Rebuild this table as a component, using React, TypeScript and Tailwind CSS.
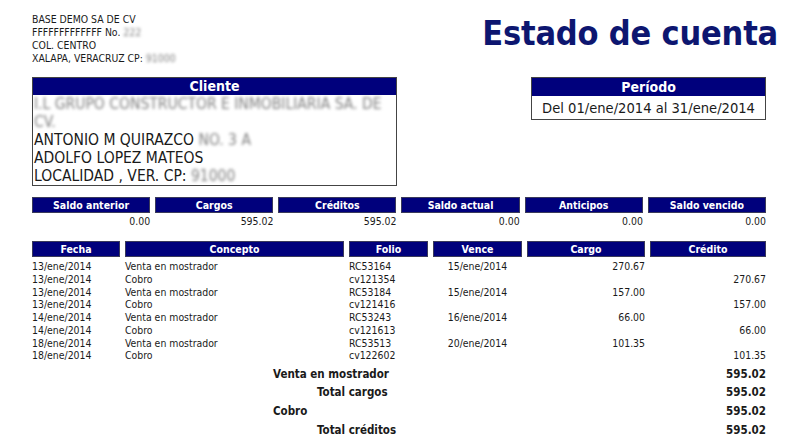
import React from 'react'

const movimientos = [
  { fecha: '13/ene/2014', concepto: 'Venta en mostrador', folio: 'RC53164', vence: '15/ene/2014', cargo: '270.67', credito: '' },
  { fecha: '13/ene/2014', concepto: 'Cobro', folio: 'cv121354', vence: '', cargo: '', credito: '270.67' },
  { fecha: '13/ene/2014', concepto: 'Venta en mostrador', folio: 'RC53184', vence: '15/ene/2014', cargo: '157.00', credito: '' },
  { fecha: '13/ene/2014', concepto: 'Cobro', folio: 'cv121416', vence: '', cargo: '', credito: '157.00' },
  { fecha: '14/ene/2014', concepto: 'Venta en mostrador', folio: 'RC53243', vence: '16/ene/2014', cargo: '66.00', credito: '' },
  { fecha: '14/ene/2014', concepto: 'Cobro', folio: 'cv121613', vence: '', cargo: '', credito: '66.00' },
  { fecha: '18/ene/2014', concepto: 'Venta en mostrador', folio: 'RC53513', vence: '20/ene/2014', cargo: '101.35', credito: '' },
  { fecha: '18/ene/2014', concepto: 'Cobro', folio: 'cv122602', vence: '', cargo: '', credito: '101.35' },
]

const resumen = [
  { label: 'Saldo anterior', value: '0.00' },
  { label: 'Cargos', value: '595.02' },
  { label: 'Créditos', value: '595.02' },
  { label: 'Saldo actual', value: '0.00' },
  { label: 'Anticipos', value: '0.00' },
  { label: 'Saldo vencido', value: '0.00' },
]

const totales = [
  { label: 'Venta en mostrador', value: '595.02', indent: false },
  { label: 'Total cargos', value: '595.02', indent: true },
  { label: 'Cobro', value: '595.02', indent: false },
  { label: 'Total créditos', value: '595.02', indent: true },
]

// texto borroso (datos ocultos)
function Blur({ children }: { children: React.ReactNode }) {
  return <span className="text-[#808080] blur-[1.4px]">{children}</span>
}

function Bar({ children, className = '' }: { children: React.ReactNode; className?: string }) {
  return (
    <div className={`bg-[#00007c] text-white font-bold text-center border border-[#3a3a5a] ${className}`}>
      {children}
    </div>
  )
}

export default function App() {
  return (
    <div className="w-[800px] h-[446px] bg-white text-[#1a1a1a] pl-[32px] font-['DejaVu_Sans_Condensed','DejaVu_Sans',sans-serif] overflow-hidden">
      {/* encabezado */}
      <div className="flex justify-between w-[734px] h-[77px]">
        <div className="pt-[13px] text-[10.4px] leading-[13px]">
          <div>BASE DEMO SA DE CV</div>
          <div>FFFFFFFFFFFFF No. <Blur>222</Blur></div>
          <div>COL. CENTRO</div>
          <div>XALAPA, VERACRUZ CP: <Blur>91000</Blur></div>
        </div>
        <h1 className="text-[34px] leading-[40px] font-bold text-[#0d1670] mt-[13px] -mr-[12px] tracking-[-0.2px]">
          Estado de cuenta
        </h1>
      </div>

      {/* cliente y periodo */}
      <div className="flex justify-between items-start w-[734px]">
        <div className="w-[365px] border border-[#444]">
          <div className="h-[17px] bg-[#00007c] text-white font-bold text-[14px] leading-[17px] text-center">Cliente</div>
          <div className="text-[15.5px] leading-[18px] px-[1px] whitespace-nowrap">
            <div><Blur>I.L GRUPO CONSTRUCTOR E INMOBILIARIA SA. DE</Blur></div>
            <div><Blur>CV.</Blur></div>
            <div>ANTONIO M QUIRAZCO <Blur>NO. 3 A</Blur></div>
            <div>ADOLFO LOPEZ MATEOS</div>
            <div>LOCALIDAD , VER. CP: <Blur>91000</Blur></div>
          </div>
        </div>
        <div className="w-[235px] border border-[#444]">
          <div className="h-[18px] bg-[#00007c] text-white font-bold text-[14px] leading-[18px] text-center">Período</div>
          <div className="h-[23px] text-[14.6px] leading-[24px] text-center">Del 01/ene/2014 al 31/ene/2014</div>
        </div>
      </div>

      {/* resumen */}
      <div className="grid grid-cols-6 gap-x-[5px] w-[734px] mt-[11px]">
        {resumen.map(r => (
          <div key={r.label}>
            <Bar className="h-[16px] text-[10.5px] leading-[14px]">{r.label}</Bar>
            <div className="text-right text-[10.4px] leading-[13px] pt-[1.5px]">{r.value}</div>
          </div>
        ))}
      </div>

      {/* movimientos */}
      <div className="grid grid-cols-[88px_219px_79px_89px_118px_116px] gap-x-[5px] w-[734px] mt-[13.5px] text-[10.4px] leading-[12.75px]">
        {['Fecha', 'Concepto', 'Folio', 'Vence', 'Cargo', 'Crédito'].map(h => (
          <Bar key={h} className="h-[16px] text-[10.5px] leading-[14px] mb-[3px]">{h}</Bar>
        ))}
        {movimientos.map((m, i) => (
          <React.Fragment key={i}>
            <div>{m.fecha}</div>
            <div>{m.concepto}</div>
            <div>{m.folio}</div>
            <div className="text-center">{m.vence}</div>
            <div className="text-right">{m.cargo}</div>
            <div className="text-right">{m.credito}</div>
          </React.Fragment>
        ))}
      </div>

      {/* totales */}
      <div className="w-[734px] mt-[2.5px] text-[11.5px] leading-[18.7px] font-bold">
        {totales.map(t => (
          <div key={t.label} className="flex justify-between">
            <span className={t.indent ? 'pl-[285px]' : 'pl-[241px]'}>{t.label}</span>
            <span>{t.value}</span>
          </div>
        ))}
      </div>
    </div>
  )
}
